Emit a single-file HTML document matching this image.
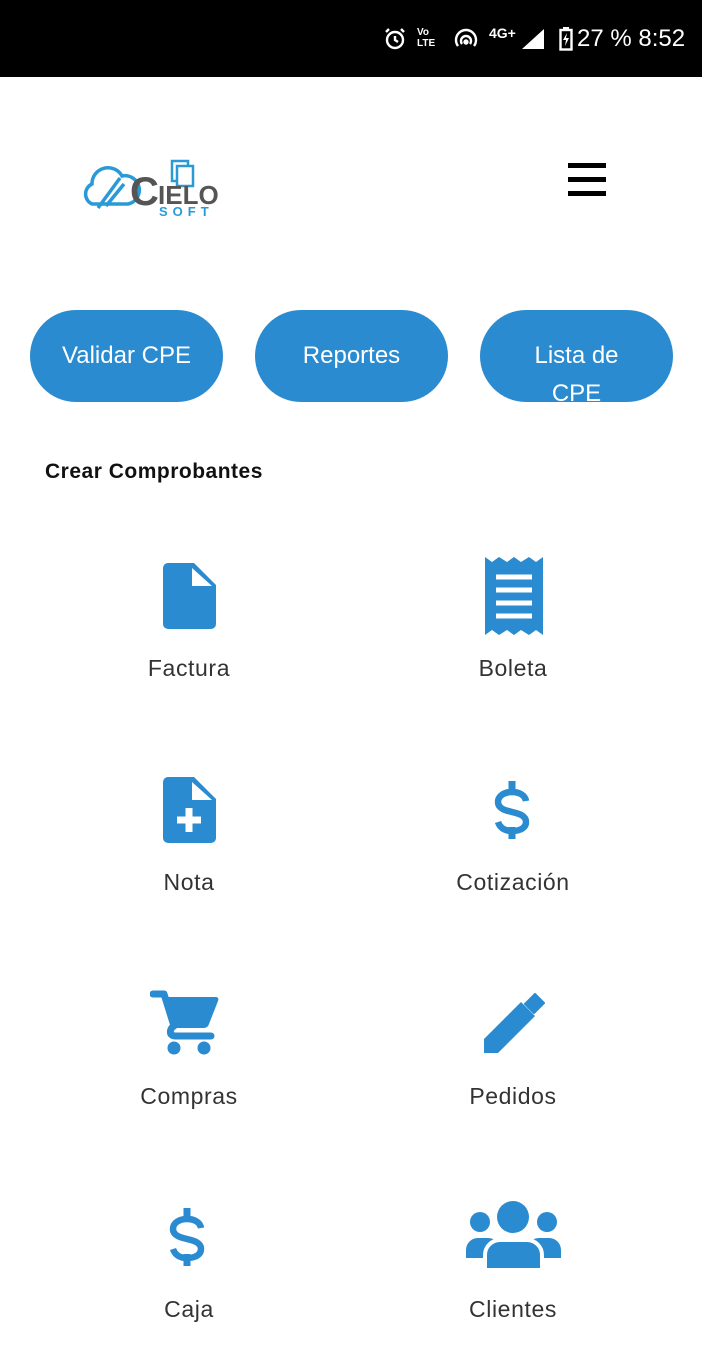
<!DOCTYPE html>
<html><head><meta charset="utf-8"><style>
*{margin:0;padding:0;box-sizing:border-box}
body{width:702px;height:1368px;background:#fff;font-family:"Liberation Sans",sans-serif;position:relative;overflow:hidden}
.sb{position:absolute;left:0;top:0;width:702px;height:77px;background:#000;color:#fff}
.btn{position:absolute;top:310px;width:193px;height:92px;border-radius:46px;background:#2a8bd0;color:#fff;font-size:24px;text-align:center;overflow:hidden}
.lbl{position:absolute;width:300px;text-align:center;font-size:23px;color:#333;letter-spacing:0.6px}
.ic{position:absolute}
</style></head><body>
<div class="sb">
<svg style="position:absolute;left:383px;top:27px" width="24" height="24" viewBox="0 0 24 24" fill="none" stroke="#fff" stroke-width="2.4"><circle cx="12" cy="13" r="8"/><path d="M12 9v4l3 2M3 5l3-3M21 5l-3-3"/></svg>
<div style="position:absolute;left:417px;top:27px;font-size:10px;font-weight:bold;line-height:11px">Vo<br>LTE</div>
<svg style="position:absolute;left:454px;top:28px" width="24" height="22" viewBox="0 0 24 22" fill="none" stroke="#fff" stroke-width="2.4"><path d="M4 18a10 10 0 1 1 16 0M8 16a5 5 0 1 1 8 0"/><circle cx="12" cy="14" r="1.5" fill="#fff"/></svg>
<div style="position:absolute;left:489px;top:25px;font-size:14px;font-weight:bold">4G+</div>
<svg style="position:absolute;left:522px;top:29px" width="22" height="20"><path d="M0 20L22 0V20Z" fill="#fff"/></svg>
<svg style="position:absolute;left:559px;top:27px" width="14" height="24"><rect x="1.5" y="3" width="11" height="19.5" fill="none" stroke="#fff" stroke-width="2.4"/><rect x="4" y="0" width="6" height="3" fill="#fff"/><path d="M8 6L4 13h3l-1 6 4-8H7z" fill="#fff"/></svg>
<div style="position:absolute;left:577px;top:25px;font-size:24px">27 % 8:52</div>
</div>
<svg style="position:absolute;left:78px;top:158px" width="145" height="62" viewBox="0 0 145 62">
<g fill="none" stroke="#2a9ad6" stroke-width="3.5"><path d="M14 46a11 11 0 0 1 0-20a16 16 0 0 1 30-8a13 13 0 0 1 6 28z"/><path d="M20 50l22-30M28 48l18-22"/></g>
<rect x="94" y="3" width="16" height="20" fill="#fff" stroke="#2a9ad6" stroke-width="2.5"/>
<rect x="99" y="8" width="16" height="20" fill="#fff" stroke="#2a9ad6" stroke-width="2.5"/>
<text x="52" y="47" font-family="Liberation Sans" font-weight="bold" font-size="40" fill="#555">C</text>
<text x="80" y="46" font-family="Liberation Sans" font-weight="bold" font-size="26" fill="#555">IELO</text>
<text x="81" y="58" font-family="Liberation Sans" font-weight="bold" font-size="13" letter-spacing="5" fill="#2a9ad6">SOFT</text>
</svg>
<div style="position:absolute;left:568px;top:163px;width:38px;height:5px;background:#000"></div>
<div style="position:absolute;left:568px;top:177px;width:38px;height:5px;background:#000"></div>
<div style="position:absolute;left:568px;top:191px;width:38px;height:5px;background:#000"></div>
<div class="btn" style="left:30px;line-height:92px">Validar CPE</div>
<div class="btn" style="left:255px;line-height:92px">Reportes</div>
<div class="btn" style="left:480px;padding-top:27px;line-height:38px">Lista de<br>CPE</div>
<div style="position:absolute;left:45px;top:460px;font-size:21px;font-weight:bold;color:#111;letter-spacing:0.5px">Crear Comprobantes</div>

<svg class="ic" style="left:163px;top:563px" width="53" height="66" viewBox="0 0 53 66"><path d="M5 0H31L53 22V61a5 5 0 0 1-5 5H5a5 5 0 0 1-5-5V5a5 5 0 0 1 5-5z" fill="#2a8bd0"/><path d="M29 5V23H49z" fill="#fff"/></svg>
<svg class="ic" style="left:485px;top:557px" width="58" height="78" viewBox="0 0 58 78"><path d="M0 0l7 5 7-5 8 5 7-5 7 5 8-5 7 5 7-5V78l-7-5-7 5-8-5-7 5-7-5-8 5-7-5-7 5z" fill="#2a8bd0"/><path d="M11 20h36M11 33h36M11 46h36M11 59h36" stroke="#fff" stroke-width="5"/></svg>
<svg class="ic" style="left:163px;top:777px" width="53" height="66" viewBox="0 0 53 66"><path d="M5 0H31L53 22V61a5 5 0 0 1-5 5H5a5 5 0 0 1-5-5V5a5 5 0 0 1 5-5z" fill="#2a8bd0"/><path d="M29 5V23H49z" fill="#fff"/><path d="M26 31v24M14 43h24" stroke="#fff" stroke-width="7"/></svg>
<svg class="ic" style="left:493px;top:781px" width="38" height="58" viewBox="0 0 38 58"><path d="M19 0v12M19 46v12" stroke="#2a8bd0" stroke-width="7"/><path d="M33 20c-1-6-7-9-14-9c-8 0-14 4-14 10c0 13 28 7 28 20c0 6-6 9-14 9c-7 0-12-3-14-9" fill="none" stroke="#2a8bd0" stroke-width="6.5"/></svg>
<svg class="ic" style="left:150px;top:990px" width="70" height="66" viewBox="0 0 70 66"><path d="M3 4h11l10 32c-5 3-5 10 1 10h36" fill="none" stroke="#2a8bd0" stroke-width="7" stroke-linejoin="round" stroke-linecap="round"/><path d="M14 7h52c2 0 3 2 2 4L59 34c-1 3-3 4-6 4H24z" fill="#2a8bd0"/><circle cx="24" cy="58" r="6.5" fill="#2a8bd0"/><circle cx="54" cy="58" r="6.5" fill="#2a8bd0"/></svg>
<svg class="ic" style="left:484px;top:993px" width="62" height="62" viewBox="0 0 62 62"><path d="M0 60V46L37 9l14 14L14 60z" fill="#2a8bd0"/><path d="M41 11l10-10 9 9-10 10z" fill="#2a8bd0" stroke="#2a8bd0" stroke-width="2" stroke-linejoin="round"/></svg>
<svg class="ic" style="left:168px;top:1208px" width="38" height="58" viewBox="0 0 38 58"><path d="M19 0v12M19 46v12" stroke="#2a8bd0" stroke-width="7"/><path d="M33 20c-1-6-7-9-14-9c-8 0-14 4-14 10c0 13 28 7 28 20c0 6-6 9-14 9c-7 0-12-3-14-9" fill="none" stroke="#2a8bd0" stroke-width="6.5"/></svg>
<svg class="ic" style="left:465px;top:1200px" width="98" height="70" viewBox="0 0 98 70">
<circle cx="48" cy="17" r="16" fill="#2a8bd0"/><circle cx="15" cy="22" r="10" fill="#2a8bd0"/><circle cx="82" cy="22" r="10" fill="#2a8bd0"/>
<path d="M1 58v-8a12 12 0 0 1 12-12h10a12 12 0 0 1 12 12v8zM62 58v-8a12 12 0 0 1 12-12h10a12 12 0 0 1 12 12v8z" fill="#2a8bd0"/>
<path d="M20 70v-15a15 15 0 0 1 15-15h27a15 15 0 0 1 15 15v15z" fill="#2a8bd0" stroke="#fff" stroke-width="4"/></svg>

<div class="lbl" style="left:39px;top:655px">Factura</div>
<div class="lbl" style="left:363px;top:655px">Boleta</div>
<div class="lbl" style="left:39px;top:869px">Nota</div>
<div class="lbl" style="left:363px;top:869px">Cotización</div>
<div class="lbl" style="left:39px;top:1083px">Compras</div>
<div class="lbl" style="left:363px;top:1083px">Pedidos</div>
<div class="lbl" style="left:39px;top:1296px">Caja</div>
<div class="lbl" style="left:363px;top:1296px">Clientes</div>
</body></html>
